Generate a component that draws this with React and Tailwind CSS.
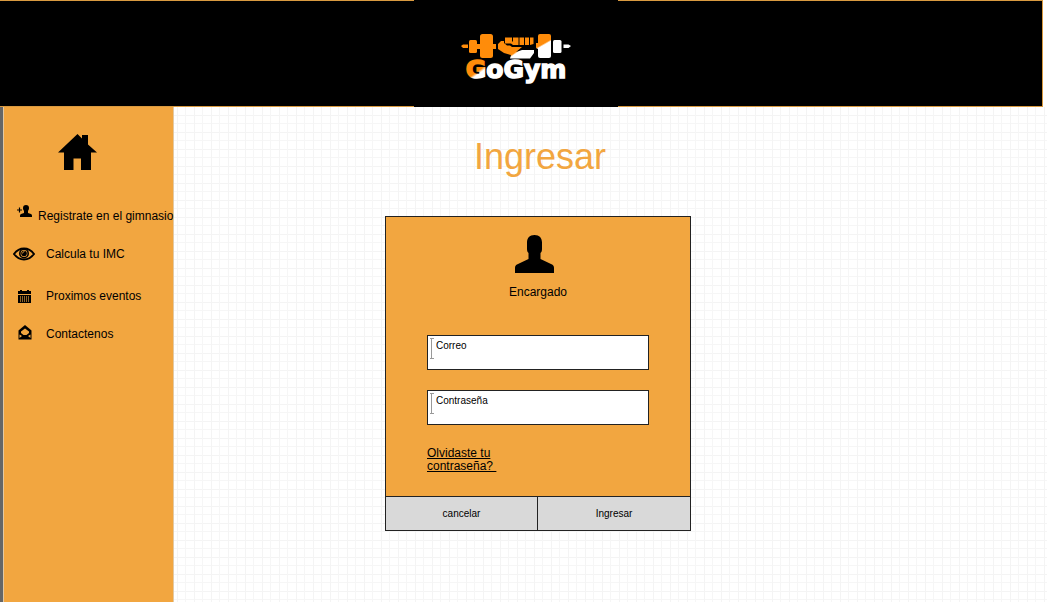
import React from "react";

function Logo() {
  return (
    <svg viewBox="0 0 112 56" className="h-14 w-28 overflow-visible" role="img" aria-label="GoGym">
      <defs>
        <linearGradient id="mark" gradientUnits="userSpaceOnUse" x1="50" y1="13" x2="61" y2="29">
          <stop offset="0.46" stopColor="#ff8c0a" />
          <stop offset="0.54" stopColor="#ffffff" />
        </linearGradient>
        <linearGradient id="plate" gradientUnits="userSpaceOnUse" x1="80" y1="5" x2="88" y2="19">
          <stop offset="0.46" stopColor="#ff8c0a" />
          <stop offset="0.56" stopColor="#ffffff" />
        </linearGradient>
        <linearGradient id="word" gradientUnits="userSpaceOnUse" x1="10" y1="28" x2="26" y2="50">
          <stop offset="0.5" stopColor="#ff8c0a" />
          <stop offset="0.6" stopColor="#ffffff" />
        </linearGradient>
      </defs>
      <g fill="#ff8c0a">
        <path d="M1 14l2-1.500h5v3.500H3z" />
        <rect x="9" y="8" width="8" height="13" rx="1.500" />
        <rect x="17" y="12" width="3" height="5" />
        <rect x="20" y="2" width="13" height="24" rx="2.500" />
        <rect x="33" y="12" width="3" height="5" />
      </g>
      <path d="M38 12l3-3h3v2l3 2.500h3l2 1.500h10l-6 5 6-2h12v3L70 26.500H50l1-3.500-7-2-6-4z" fill="url(#mark)" />
      <path d="M45 5.500h7v4h1v-4h5.500v7.500H53l-2-1.500h-6zM59.500 5.500h4.500v7.500h-4.500zM65 5.500h4v7.500h-4zM70 5.500h3.500v6.500l-3.500 1z" fill="#ff8c0a" />
      <path d="M80 2h9q2 0 2 2v20q0 2-2 2h-9q-2 0-2-2v-7l-2-1v-5h2V4q0-2 2-2z" fill="url(#plate)" />
      <g fill="#fff">
        <rect x="93" y="8" width="8.500" height="13" rx="1.500" />
        <path d="M103.500 12.500h5L111 14l-2.500 2h-5z" />
      </g>
      <text
        x="56"
        y="46"
        textAnchor="middle"
        fill="url(#word)"
        stroke="url(#word)"
        strokeWidth="1.500"
        className="font-['DejaVu_Sans'] text-[25px] font-bold"
      >
        GoGym
      </text>
    </svg>
  );
}

function HomeIcon() {
  return (
    <svg viewBox="0 0 39 36" className="h-9 w-[39px]" aria-hidden="true">
      <path d="M19.500 0l4.500 4.500V1h6v9.500l9 8h-6V36H23V24.500h-7.500V36H6V18.500H0z" />
    </svg>
  );
}

function PersonIcon() {
  return (
    <svg viewBox="0 0 39 38" className="mr-2 h-[38px] w-[39px]" aria-hidden="true">
      <path d="M19.500 0c5 0 7.500 3 7.500 7.500V14c0 2-.5 3-1.500 4v6L36 29c2.500 1 3 2 3 4v5H0v-5c0-2 .5-3 3-4l10.500-5v-6c-1-1-1.500-2-1.500-4V7.500C12 3 14.500 0 19.500 0z" />
    </svg>
  );
}

function AddPersonIcon() {
  return (
    <svg viewBox="0 0 16 13" className="h-[13px] w-4" aria-hidden="true">
      <path d="M0 5h5M2.500 2.500v5" stroke="#000" strokeWidth="1.200" />
      <path d="M9 0c2 0 3 1 3 3 0 1.500-.5 2-1 3v2l3 1c1 .5 1 1 1 3H3c0-2 0-2.500 1-3l3-1V6C6.500 5 6 4.500 6 3c0-2 1-3 3-3z" />
    </svg>
  );
}

function EyeIcon() {
  return (
    <svg viewBox="0 0 22 14" className="h-3.5 w-[22px]" aria-hidden="true">
      <path d="M1 7c3-4 6.500-5.500 10-5.500s7 1.500 10 5.500c-3 4-6.500 5.500-10 5.500S4 11 1 7z" fill="none" stroke="#000" strokeWidth="2" />
      <circle cx="11" cy="6.500" r="4.200" fill="none" stroke="#000" strokeWidth="1.600" />
      <circle cx="11" cy="6.500" r="2.800" />
      <path d="M9.500 6.500q0-2 2-2" fill="none" stroke="#f2a640" strokeWidth="0.800" />
    </svg>
  );
}

function CalendarIcon() {
  return (
    <svg viewBox="0 0 13 13" className="size-[13px]" aria-hidden="true">
      <path d="M0 1h2V0h2v1h5V0h2v1h2v3H0zM0 5h13v8H0z" />
      <path d="M2.500 6v6M4.500 6v6M6.500 6v6M8.500 6v6M10.500 6v6" stroke="#f2a640" strokeWidth="0.600" />
    </svg>
  );
}

function EnvelopeIcon() {
  return (
    <svg viewBox="0 0 14 15" className="h-[15px] w-3.5" aria-hidden="true">
      <path d="M7 0l6.500 5.500v9H.5v-9z" />
      <path d="M7 3.500l4 3v1.500L8.500 10h-3L3 8V6.500z" fill="#f2a640" />
      <path d="M1.500 9.500l2.500 1.500-2.500 2zM12.500 9.500L10 11l2.500 2z" fill="#f2a640" />
    </svg>
  );
}

const links = [
  { label: "Registrate en el gimnasio", Icon: AddPersonIcon, item: "", row: "pl-[13px] gap-[5px]", iconBox: "pb-2.5" },
  { label: "Calcula tu IMC", Icon: EyeIcon, item: "", row: "pl-2", iconBox: "w-[34px] pl-px" },
  { label: "Proximos eventos", Icon: CalendarIcon, item: "mt-1", row: "pl-2", iconBox: "w-[34px] pl-1.5" },
  { label: "Contactenos", Icon: EnvelopeIcon, item: "", row: "pl-2", iconBox: "w-[34px] pl-1.5 pb-1" },
];

function Field({ label, type }) {
  return (
    <div className="relative">
      <input
        type={type}
        aria-label={label}
        placeholder={label}
        className="block h-[35px] w-full border border-[#222] bg-white pt-0.5 pr-2 pb-4 pl-2 text-[10px] leading-[14px] text-black outline-none placeholder:text-black placeholder:opacity-100"
      />
      <svg viewBox="0 0 5 22" className="absolute top-[3px] left-[3px] h-[22px] w-[5px]" aria-hidden="true">
        <path d="M0 .5h4M0 20.500h4M1.500 .5v20" fill="none" stroke="#999" />
      </svg>
    </div>
  );
}

export default function App() {
  return (
    <div className="flex min-h-screen flex-col bg-white font-['Liberation_Sans',Arial,sans-serif] text-xs text-black">
      <header className="mr-1 flex h-[107px] justify-center border-y border-r border-[#d99a40] bg-black pr-[11px]">
        <div className="-my-px flex w-[204px] items-center justify-center bg-black pt-3">
          <Logo />
        </div>
      </header>

      <div className="flex flex-1">
        <aside className="w-[174px] shrink-0 border-l-[3px] border-[#666]">
          <nav className="h-full border-x border-[#e3c9a3] bg-[#f2a640]">
            <a href="#inicio" aria-label="Inicio" className="block pt-[27px] pl-[54px]">
              <HomeIcon />
            </a>
            <ul className="pt-[27px]">
              {links.map(({ label, Icon, item, row, iconBox }) => (
                <li key={label} className={item}>
                  <a href="#" className={`flex h-[38px] items-center whitespace-nowrap ${row}`}>
                    <span className={`block shrink-0 ${iconBox}`}>
                      <Icon />
                    </span>
                    {label}
                  </a>
                </li>
              ))}
            </ul>
          </nav>
        </aside>

        <main className="flex-1 bg-[linear-gradient(90deg,#f4f4f4_1px,transparent_1px,transparent_8px,#f6f6f6_8px,#f6f6f6_9px,transparent_9px),linear-gradient(#f4f4f4_1px,transparent_1px,transparent_8px,#f6f6f6_8px,#f6f6f6_9px,transparent_9px)] bg-[length:17px_17px] bg-[position:3px_8px] pt-[30px] pl-[211px]">
          <div className="w-[306px]">
            <h1 className="pl-1 text-center text-[36px] leading-10 text-[#f2a640]">Ingresar</h1>
            <form className="mt-[39px] border border-[#222] bg-[#f2a640]" onSubmit={(e) => e.preventDefault()}>
              <div className="flex flex-col items-center pt-[18px]">
                <PersonIcon />
                <p className="pt-[11px] leading-4">Encargado</p>
              </div>
              <div className="flex flex-col gap-5 px-[41px] pt-[35px]">
                <Field label="Correo" type="email" />
                <Field label="Contraseña" type="password" />
                <a href="#recuperar" className="w-20 pt-0.5 leading-[13px] underline">
                  Olvidaste tu contraseña?&nbsp;
                </a>
              </div>
              <div className="mt-[23px] grid h-[34px] grid-cols-2 divide-x divide-[#222] border-t border-[#222] bg-[#d9d9d9] text-[10px]">
                <button type="button">cancelar</button>
                <button type="submit">Ingresar</button>
              </div>
            </form>
          </div>
        </main>
      </div>
    </div>
  );
}
